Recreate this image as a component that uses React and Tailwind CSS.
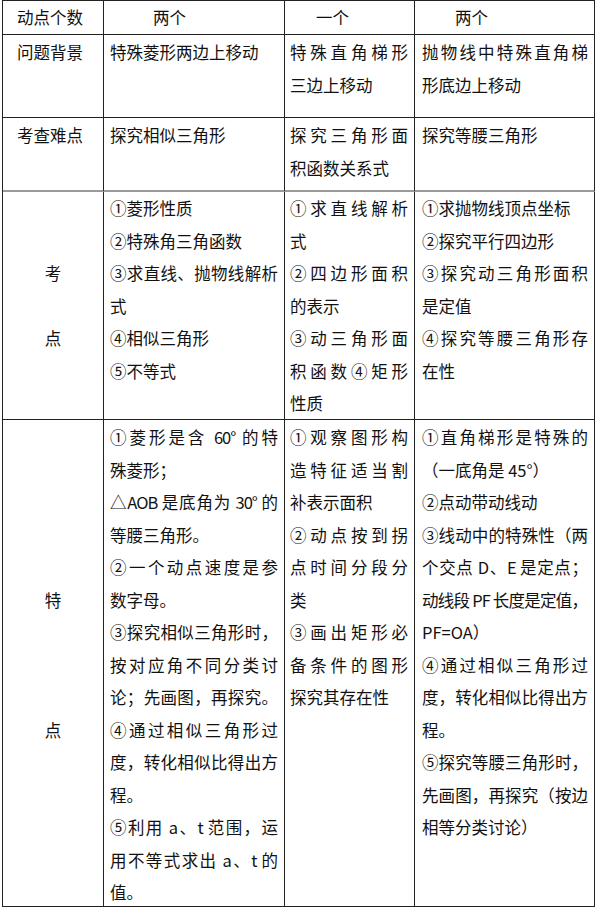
import React from 'react'

// lines ending with "|" are stretched to the full cell width
const BODY = [
  {
    h: 'h-[83px]',
    pt: 'pt-[1px]',
    first: { left: true, lines: ['问题背景'] },
    cols: [
      ['特殊菱形两边上移动'],
      ['特殊直角梯形|', '三边上移动'],
      ['抛物线中特殊直角梯|', '形底边上移动'],
    ],
  },
  {
    h: 'h-[74px]',
    pt: 'pt-[1px]',
    grey: true,
    first: { left: true, lines: ['考查难点'] },
    cols: [
      ['探究相似三角形'],
      ['探究三角形面|', '积函数关系式'],
      ['探究等腰三角形'],
    ],
  },
  {
    h: 'h-[228px]',
    pt: 'pt-0',
    first: { left: false, lines: ['', '', '考', '', '点'] },
    cols: [
      ['①菱形性质', '②特殊角三角函数', '③求直线、抛物线解析|', '式', '④相似三角形', '⑤不等式'],
      ['①求直线解析|', '式', '②四边形面积|', '的表示', '③动三角形面|', '积函数④矩形|', '性质'],
      ['①求抛物线顶点坐标', '②探究平行四边形', '③探究动三角形面积|', '是定值', '④探究等腰三角形存|', '在性'],
    ],
  },
  {
    h: 'h-[487px]',
    pt: 'pt-[1px]',
    first: { left: false, lines: ['', '', '', '', '', '特', '', '', '', '点'] },
    cols: [
      [
        '①菱形是含 60° 的特|',
        '殊菱形；',
        '△AOB 是底角为 30° 的|',
        '等腰三角形。',
        '②一个动点速度是参|',
        '数字母。',
        '③探究相似三角形时，|',
        '按对应角不同分类讨|',
        '论；先画图，再探究。|',
        '④通过相似三角形过|',
        '度，转化相似比得出方|',
        '程。',
        '⑤利用 a、t 范围，运|',
        '用不等式求出 a、t 的|',
        '值。',
      ],
      [
        '①观察图形构|',
        '造特征适当割|',
        '补表示面积',
        '②动点按到拐|',
        '点时间分段分|',
        '类',
        '③画出矩形必|',
        '备条件的图形|',
        '探究其存在性',
      ],
      [
        '①直角梯形是特殊的|',
        '（一底角是 45°）',
        '②点动带动线动',
        '③线动中的特殊性（两|',
        '个交点 D、E 是定点；|',
        '动线段 PF 长度是定值，|',
        'PF=OA）',
        '④通过相似三角形过|',
        '度，转化相似比得出方|',
        '程。',
        '⑤探究等腰三角形时，|',
        '先画图，再探究（按边|',
        '相等分类讨论）',
      ],
    ],
  },
]

const PAD = ['pl-[6px] pr-[7px]', 'pl-[5px] pr-[7px]', 'pl-[7px] pr-[7px]']

function Line({ text }) {
  const stretch = text.endsWith('|')
  const t = stretch ? text.slice(0, -1) : text
  return (
    <div
      className={`h-[32.5px] leading-[32.5px] whitespace-nowrap ${
        stretch ? 'text-justify [text-align-last:justify] tracking-[-1px]' : ''
      }`}
    >
      {t || '\u00a0'}
    </div>
  )
}

export default function App() {
  return (
    <div className="w-[595px] h-[909px] bg-white pl-[2px] text-[16.5px] text-[#111] font-['Noto_Sans_CJK_SC',sans-serif]">
      <div className="grid grid-cols-[101px_181px_130px_180px] border-l border-t border-[#222]">
        {/* header */}
        <div className="h-[34px] leading-[33px] pl-[14px] border-r border-b border-[#222]">动点个数</div>
        <div className="h-[34px] leading-[33px] pl-[49px] border-r border-b border-[#222]">两个</div>
        <div className="h-[34px] leading-[33px] pl-[31px] border-r border-b border-[#222]">一个</div>
        <div className="h-[34px] leading-[33px] pl-[40px] border-r border-b border-[#222]">两个</div>

        {BODY.map((row, i) => (
          <React.Fragment key={i}>
            <div
              className={`${row.h} ${row.pt} border-r border-[#222] ${
                row.grey ? 'border-b-2 border-b-[#9a9a9a]' : 'border-b'
              } ${row.first.left ? 'pl-[14px]' : 'text-center'}`}
            >
              {row.first.lines.map((l, k) => (
                <Line key={k} text={l} />
              ))}
            </div>
            {row.cols.map((lines, j) => (
              <div
                key={j}
                className={`${row.h} ${row.pt} ${PAD[j]} border-r border-[#222] ${
                  row.grey ? 'border-b-2 border-b-[#9a9a9a]' : 'border-b'
                }`}
              >
                {lines.map((l, k) => (
                  <Line key={k} text={l} />
                ))}
              </div>
            ))}
          </React.Fragment>
        ))}
      </div>
    </div>
  )
}
